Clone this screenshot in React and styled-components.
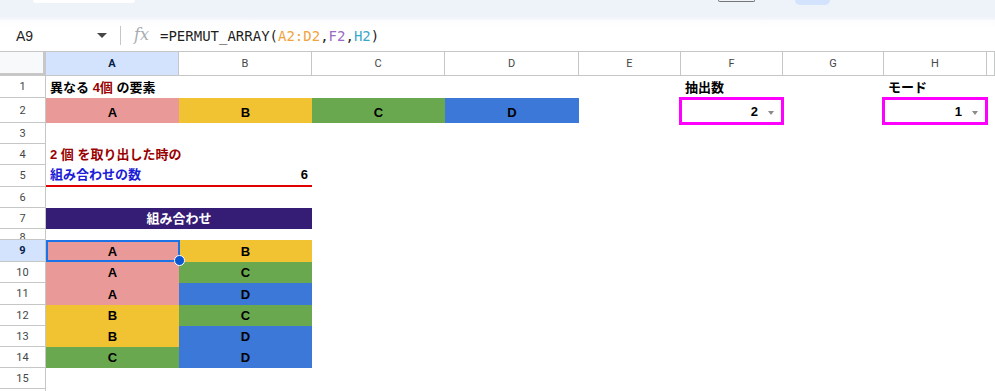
import React from 'react';
import styled, { createGlobalStyle } from 'styled-components';

const GlobalStyle = createGlobalStyle`
  html, body { margin: 0; padding: 0; background: #ffffff; overflow: hidden; }
  body { font-family: "Liberation Sans", Arial, "Noto Sans CJK JP", sans-serif; }
`;

const COLS = '46px 133px 133px 133px 134px 102px 102px 101px 103px 1fr';
const LINE = '#c4c7c5';

const fill = {
  A: '#ea9999',
  B: '#f1c232',
  C: '#6aa84f',
  D: '#3c78d8',
};

const Page = styled.div`
  width: 995px;
  height: 391px;
  overflow: hidden;
  display: flex;
  flex-direction: column;
`;

const Toolbar = styled.div`
  height: 20px;
  flex: none;
  display: flex;
  align-items: flex-start;
  background: linear-gradient(#eef2f9 0, #eef2f9 16px, #f6f8fc 20px);
  padding-left: 33px;
`;

const ToolChip = styled.div`
  width: ${p => p.$w}px;
  height: ${p => p.$h}px;
  margin-left: ${p => p.$ml}px;
  background: ${p => p.$bg};
  border: ${p => (p.$outline ? '1px solid #747775' : 'none')};
  border-top: none;
  border-radius: 0 0 6px 6px;
  box-sizing: border-box;
`;

const FormulaBar = styled.div`
  height: 32px;
  flex: none;
  display: flex;
  align-items: center;
  border-bottom: 1px solid ${LINE};
  box-sizing: border-box;
  background: linear-gradient(#fbfcfe, #ffffff 8px);
`;

const NameBox = styled.div`
  width: 80px;
  padding-left: 16px;
  font-size: 14px;
  color: #1f1f1f;
`;

const Caret = styled.div`
  width: 0;
  height: 0;
  margin-left: 1px;
  border-left: 5px solid transparent;
  border-right: 5px solid transparent;
  border-top: 5px solid #444746;
`;

const Divider = styled.div`
  width: 1px;
  height: 19px;
  margin: 0 13px 0 13px;
  background: #c4c7c5;
`;

const Fx = styled.div`
  font-family: "DejaVu Serif", "Liberation Serif", serif;
  font-style: italic;
  font-size: 16px;
  color: #a8acb0;
  width: 26px;
  margin-top: -2px;
`;

const Formula = styled.div`
  font-family: "DejaVu Sans Mono", "Liberation Mono", monospace;
  font-size: 14px;
  color: #1f1f1f;
  white-space: pre;
`;

const Ref = styled.span`
  color: ${p => p.$c};
`;

const Row = styled.div`
  display: grid;
  grid-template-columns: ${COLS};
  height: ${p => p.$h}px;
  flex: none;
`;

const Corner = styled.div`
  background: #f8f9fa;
  border-right: 3px solid #c7c7c7;
  border-bottom: 3px solid #c7c7c7;
  box-sizing: border-box;
`;

const ColHead = styled.div`
  display: flex;
  align-items: center;
  justify-content: center;
  font-family: Roboto, "Liberation Sans", sans-serif;
  font-size: 11px;
  color: ${p => (p.$active ? '#041e49' : '#444746')};
  font-weight: ${p => (p.$active ? 700 : 400)};
  background: ${p => (p.$active ? '#d3e3fd' : '#ffffff')};
  border-right: 1px solid ${LINE};
  border-bottom: 1px solid ${LINE};
  box-sizing: border-box;
`;

const RowHead = styled.div`
  display: flex;
  align-items: ${p => (p.$top ? 'flex-start' : 'center')};
  padding-top: ${p => (p.$top ? 3 : 0)}px;
  justify-content: center;
  overflow: hidden;
  font-family: Roboto, "Liberation Sans", sans-serif;
  font-size: 11px;
  color: ${p => (p.$active ? '#041e49' : '#444746')};
  font-weight: ${p => (p.$active ? 700 : 400)};
  background: ${p => (p.$active ? '#d3e3fd' : '#ffffff')};
  border-right: 1px solid ${LINE};
  border-bottom: 1px solid ${LINE};
  box-sizing: border-box;
  line-height: 1;
`;

const Cell = styled.div`
  grid-column: span ${p => p.$span || 1};
  position: relative;
  display: flex;
  align-items: flex-end;
  justify-content: ${p => p.$align === 'left' ? 'flex-start' : p.$align === 'right' ? 'flex-end' : 'center'};
  padding: 0 4px 3px;
  box-sizing: border-box;
  background: ${p => p.$bg || 'transparent'};
  color: ${p => p.$color || '#000000'};
  font-size: 13px;
  font-weight: 700;
  line-height: 15px;
  white-space: nowrap;
  border-bottom: ${p => (p.$underline ? '2px solid #e00000' : 'none')};
`;

const Red = styled.span`
  color: #990000;
`;

const Picker = styled.div`
  grid-column: span 1;
  margin: -1px -1px -2px -2px;
  border: 3px solid #ff00ff;
  display: flex;
  align-items: center;
  justify-content: flex-end;
  gap: 10px;
  padding: 1px 7px 0 0;
  font-size: 13px;
  font-weight: 700;
  color: #000000;
  box-sizing: border-box;
`;

const PickArrow = styled.div`
  width: 0;
  height: 0;
  border-left: 3.5px solid transparent;
  border-right: 3.5px solid transparent;
  border-top: 4px solid #8a8a8a;
  margin-top: 2px;
`;

const Selection = styled.div`
  position: absolute;
  z-index: 3;
  left: 0;
  top: 0;
  right: -1px;
  bottom: 0;
  border: 2px solid #1a73e8;
  pointer-events: none;
`;

const Handle = styled.div`
  position: absolute;
  right: -7px;
  bottom: -6px;
  width: 9px;
  height: 9px;
  border-radius: 50%;
  background: #0b57d0;
  border: 1.5px solid #ffffff;
`;

const Blank = () => <Cell $span={9} />;

const PairRow = ({ n, h, a, b, selected }) => (
  <Row $h={h}>
    <RowHead $active={selected}>{n}</RowHead>
    <Cell $bg={fill[a]}>
      {a}
      {selected && (
        <Selection>
          <Handle />
        </Selection>
      )}
    </Cell>
    <Cell $bg={fill[b]}>{b}</Cell>
    <Cell $span={7} />
  </Row>
);

const pairs = [
  ['A', 'B'],
  ['A', 'C'],
  ['A', 'D'],
  ['B', 'C'],
  ['B', 'D'],
  ['C', 'D'],
];
const pairHeights = [22, 21, 22, 21, 21, 21];

const App = () => {
  return (
    <Page>
      <GlobalStyle />
      <Toolbar>
        <ToolChip $w={102} $h={3} $ml={0} $bg="#ffffff" />
        <ToolChip $w={37} $h={2} $ml={583} $bg="transparent" $outline />
        <ToolChip $w={35} $h={5} $ml={40} $bg="#d3e3fd" />
      </Toolbar>
      <FormulaBar>
        <NameBox>A9</NameBox>
        <Caret />
        <Divider />
        <Fx>fx</Fx>
        <Formula>
          =PERMUT_ARRAY(<Ref $c="#f0a43a">A2:D2</Ref>,<Ref $c="#9b6bc6">F2</Ref>,<Ref $c="#3aa8c8">H2</Ref>)
        </Formula>
      </FormulaBar>

      <Row $h={24}>
        <Corner />
        <ColHead $active>A</ColHead>
        <ColHead>B</ColHead>
        <ColHead>C</ColHead>
        <ColHead>D</ColHead>
        <ColHead>E</ColHead>
        <ColHead>F</ColHead>
        <ColHead>G</ColHead>
        <ColHead>H</ColHead>
        <ColHead />
      </Row>

      <Row $h={22}>
        <RowHead>1</RowHead>
        <Cell $span={4} $align="left">
          異なる&nbsp;<Red>4個</Red>&nbsp;の要素
        </Cell>
        <Cell />
        <Cell $align="left">抽出数</Cell>
        <Cell />
        <Cell $align="left">モード</Cell>
        <Cell />
      </Row>

      <Row $h={25}>
        <RowHead>2</RowHead>
        <Cell $bg={fill.A}>A</Cell>
        <Cell $bg={fill.B}>B</Cell>
        <Cell $bg={fill.C}>C</Cell>
        <Cell $bg={fill.D}>D</Cell>
        <Cell />
        <Picker>
          2<PickArrow />
        </Picker>
        <Cell />
        <Picker>
          1<PickArrow />
        </Picker>
        <Cell />
      </Row>

      <Row $h={21}>
        <RowHead>3</RowHead>
        <Blank />
      </Row>

      <Row $h={21}>
        <RowHead>4</RowHead>
        <Cell $span={3} $align="left" $color="#990000">
          2 個 を取り出した時の
        </Cell>
        <Cell $span={6} />
      </Row>

      <Row $h={22}>
        <RowHead>5</RowHead>
        <Cell $align="left" $color="#1c1cd6" $underline>
          組み合わせの数
        </Cell>
        <Cell $align="right" $underline>
          6
        </Cell>
        <Cell $span={7} />
      </Row>

      <Row $h={21}>
        <RowHead>6</RowHead>
        <Blank />
      </Row>

      <Row $h={21}>
        <RowHead>7</RowHead>
        <Cell $span={2} $bg="#351c75" $color="#ffffff">
          組み合わせ
        </Cell>
        <Cell $span={7} />
      </Row>

      <Row $h={11}>
        <RowHead $top>8</RowHead>
        <Blank />
      </Row>

      {pairs.map(([a, b], i) => (
        <PairRow key={i} n={9 + i} h={pairHeights[i]} a={a} b={b} selected={i === 0} />
      ))}

      <Row $h={21}>
        <RowHead>15</RowHead>
        <Blank />
      </Row>
      <Row $h={21}>
        <RowHead />
        <Blank />
      </Row>
    </Page>
  );
};

export default App;
